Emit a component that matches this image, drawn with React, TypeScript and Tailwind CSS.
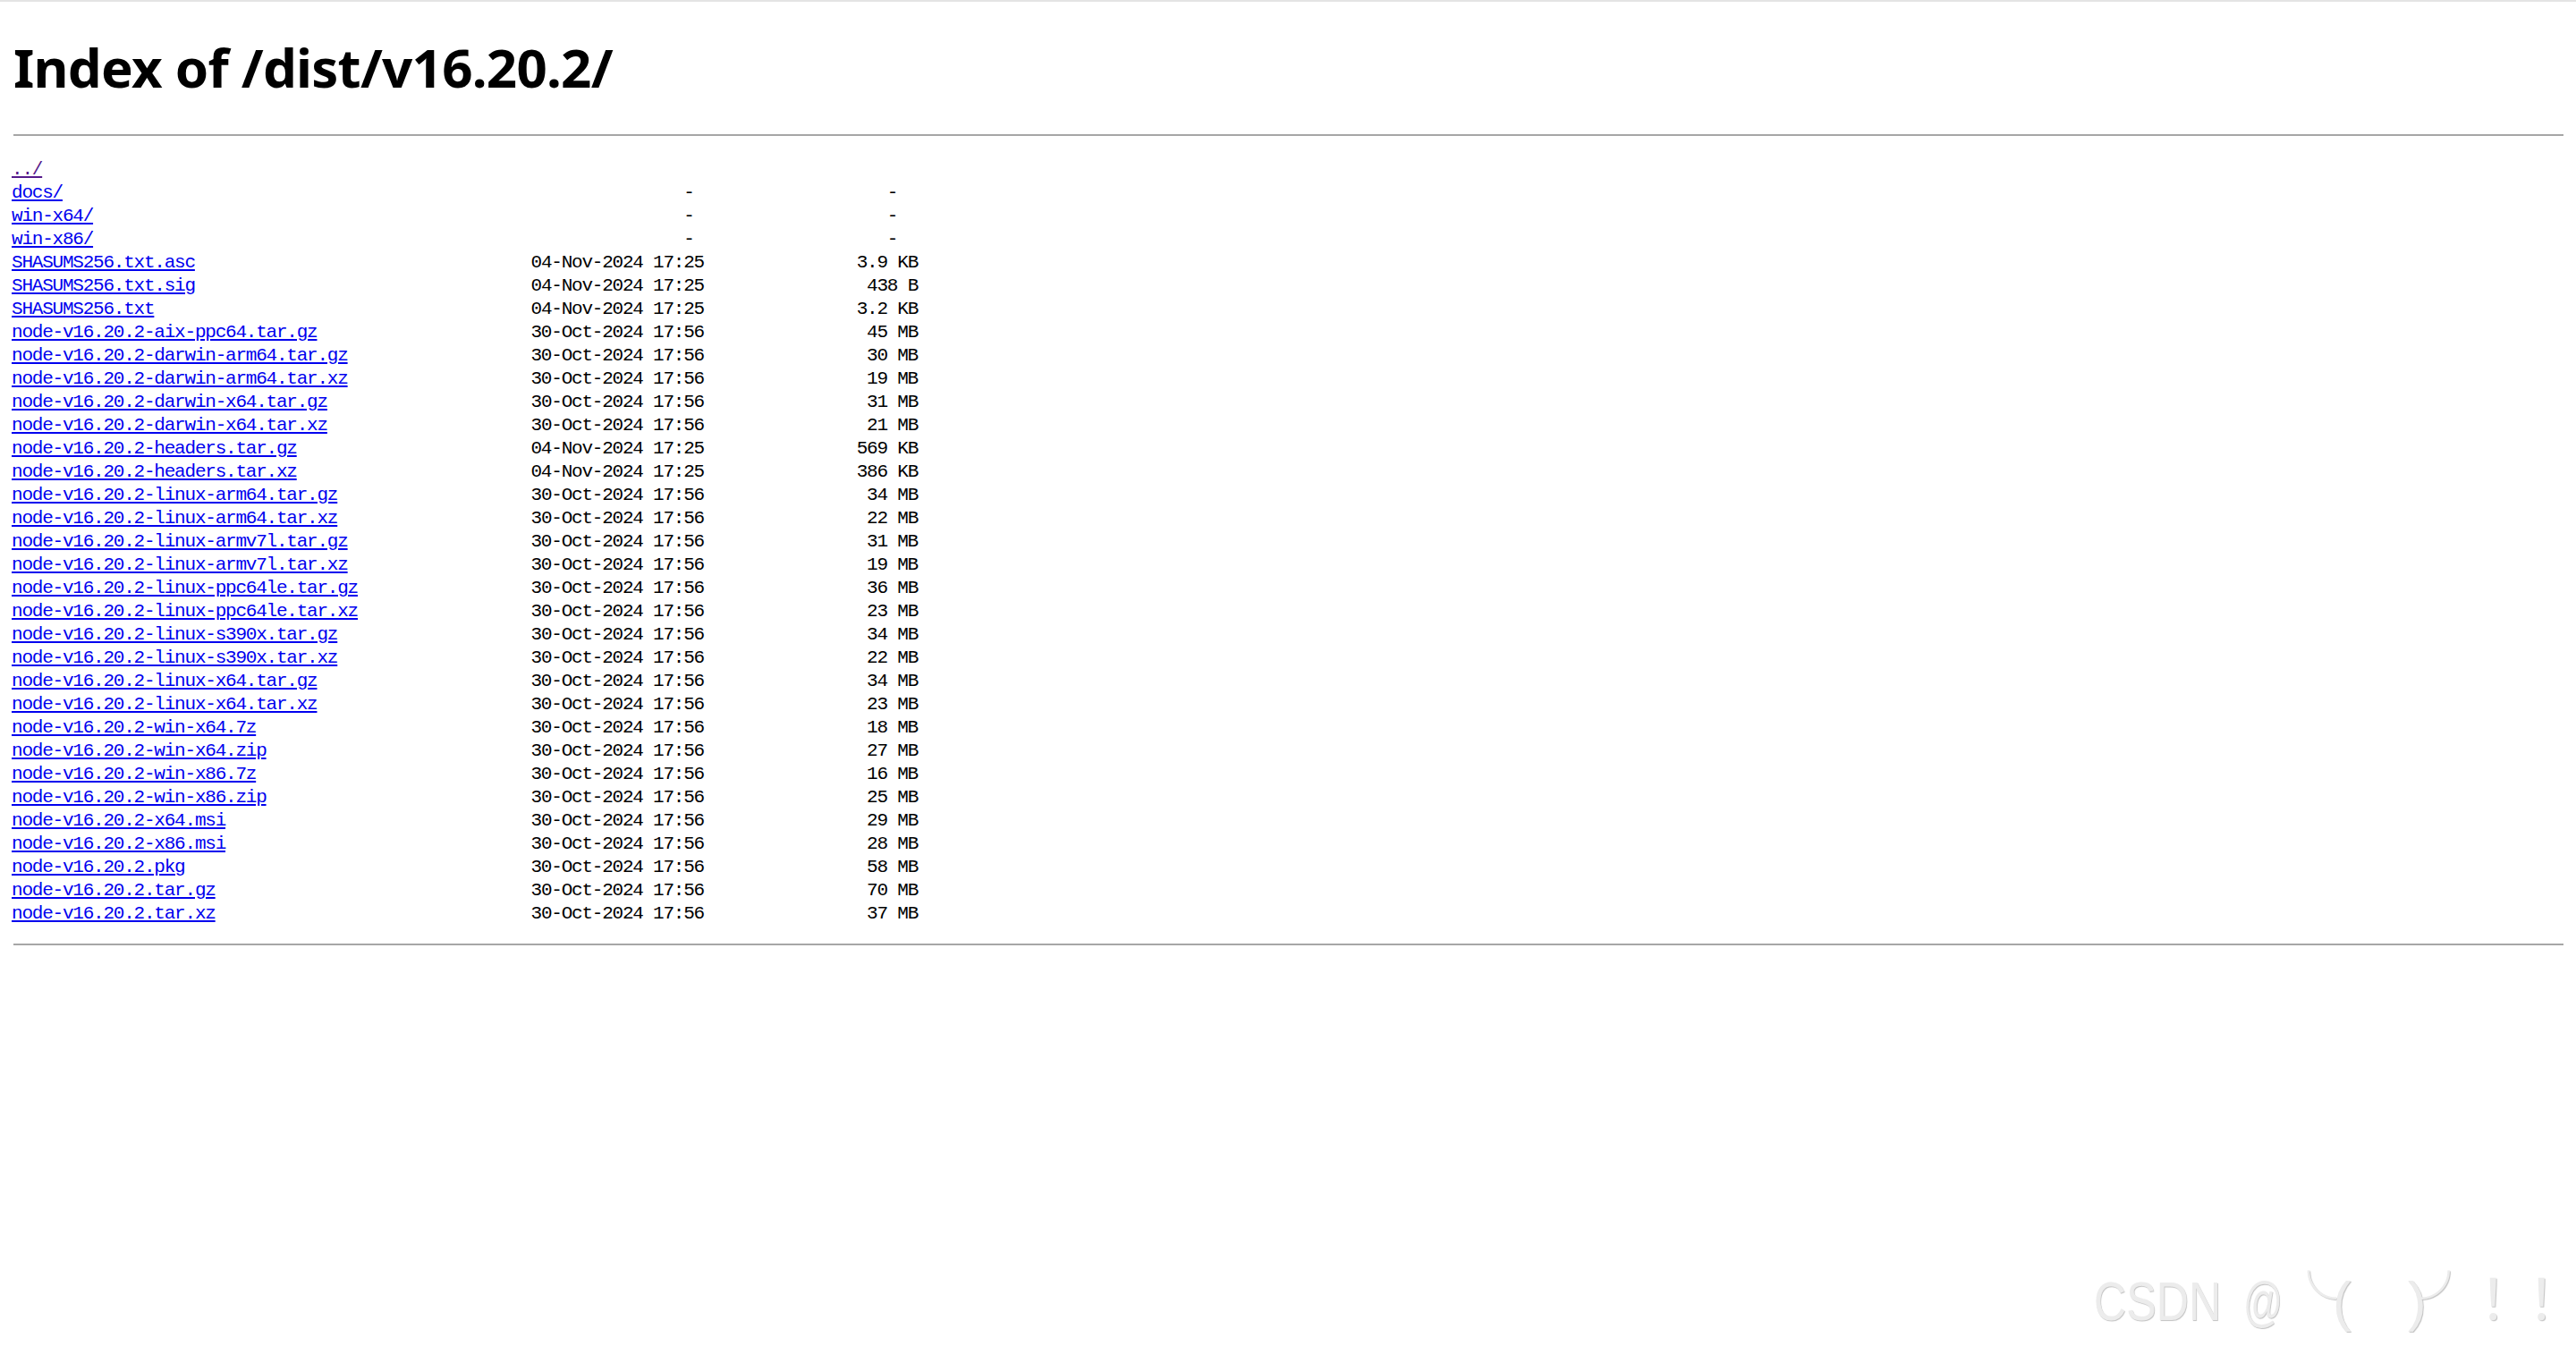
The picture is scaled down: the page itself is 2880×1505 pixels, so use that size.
import React from "react";

const dirs = ["docs/", "win-x64/", "win-x86/"];

const files: [string, string, string][] = [
  ["SHASUMS256.txt.asc", "04-Nov-2024 17:25", "3.9 KB"],
  ["SHASUMS256.txt.sig", "04-Nov-2024 17:25", "438 B"],
  ["SHASUMS256.txt", "04-Nov-2024 17:25", "3.2 KB"],
  ["node-v16.20.2-aix-ppc64.tar.gz", "30-Oct-2024 17:56", "45 MB"],
  ["node-v16.20.2-darwin-arm64.tar.gz", "30-Oct-2024 17:56", "30 MB"],
  ["node-v16.20.2-darwin-arm64.tar.xz", "30-Oct-2024 17:56", "19 MB"],
  ["node-v16.20.2-darwin-x64.tar.gz", "30-Oct-2024 17:56", "31 MB"],
  ["node-v16.20.2-darwin-x64.tar.xz", "30-Oct-2024 17:56", "21 MB"],
  ["node-v16.20.2-headers.tar.gz", "04-Nov-2024 17:25", "569 KB"],
  ["node-v16.20.2-headers.tar.xz", "04-Nov-2024 17:25", "386 KB"],
  ["node-v16.20.2-linux-arm64.tar.gz", "30-Oct-2024 17:56", "34 MB"],
  ["node-v16.20.2-linux-arm64.tar.xz", "30-Oct-2024 17:56", "22 MB"],
  ["node-v16.20.2-linux-armv7l.tar.gz", "30-Oct-2024 17:56", "31 MB"],
  ["node-v16.20.2-linux-armv7l.tar.xz", "30-Oct-2024 17:56", "19 MB"],
  ["node-v16.20.2-linux-ppc64le.tar.gz", "30-Oct-2024 17:56", "36 MB"],
  ["node-v16.20.2-linux-ppc64le.tar.xz", "30-Oct-2024 17:56", "23 MB"],
  ["node-v16.20.2-linux-s390x.tar.gz", "30-Oct-2024 17:56", "34 MB"],
  ["node-v16.20.2-linux-s390x.tar.xz", "30-Oct-2024 17:56", "22 MB"],
  ["node-v16.20.2-linux-x64.tar.gz", "30-Oct-2024 17:56", "34 MB"],
  ["node-v16.20.2-linux-x64.tar.xz", "30-Oct-2024 17:56", "23 MB"],
  ["node-v16.20.2-win-x64.7z", "30-Oct-2024 17:56", "18 MB"],
  ["node-v16.20.2-win-x64.zip", "30-Oct-2024 17:56", "27 MB"],
  ["node-v16.20.2-win-x86.7z", "30-Oct-2024 17:56", "16 MB"],
  ["node-v16.20.2-win-x86.zip", "30-Oct-2024 17:56", "25 MB"],
  ["node-v16.20.2-x64.msi", "30-Oct-2024 17:56", "29 MB"],
  ["node-v16.20.2-x86.msi", "30-Oct-2024 17:56", "28 MB"],
  ["node-v16.20.2.pkg", "30-Oct-2024 17:56", "58 MB"],
  ["node-v16.20.2.tar.gz", "30-Oct-2024 17:56", "70 MB"],
  ["node-v16.20.2.tar.xz", "30-Oct-2024 17:56", "37 MB"],
];

const pad = (n: number) => " ".repeat(Math.max(0, n));

function Listing() {
  return (
    <pre className="-ml-[2px] mt-[25px] whitespace-pre font-['Liberation_Mono','Courier_New',monospace] text-[21px] leading-[26px] tracking-[-1.22px] text-black">
      <a href="#" className="text-[#551a8b] underline">
        ../
      </a>
      {"\n"}
      {dirs.map((d) => (
        <React.Fragment key={d}>
          <a href="#" className="text-[#0000ee] underline">
            {d}
          </a>
          {pad(51 - d.length) + pad(15) + "-" + pad(19) + "-\n"}
        </React.Fragment>
      ))}
      {files.map(([name, date, size]) => (
        <React.Fragment key={name}>
          <a href="#" className="text-[#0000ee] underline">
            {name}
          </a>
          {pad(51 - name.length) + date + size.padStart(21, " ") + "\n"}
        </React.Fragment>
      ))}
    </pre>
  );
}

function Watermark() {
  const mark =
    "shrink-0 text-[62px] leading-[62px] text-[#ececec] [text-shadow:1px_1px_1px_#c2c2c2] whitespace-pre";
  const latin = "font-['Liberation_Sans',Arial,sans-serif]";
  const cjk = "font-['Noto_Sans_CJK_SC','Noto_Sans',sans-serif]";
  return (
    <div className="pointer-events-none absolute left-[2341px] top-[1418px] flex select-none items-baseline">
      <span className={`${mark} ${latin} w-[167px] origin-left scale-x-[0.81]`}>CSDN</span>
      <span className={`${mark} ${latin} w-[42px] origin-left scale-x-[0.7]`}>@</span>
      <span className={`${mark} ${cjk} tracking-[-4px]`}>╰</span>
      <span className={`${mark} ${latin} w-[84px]`}>(</span>
      <span className={`${mark} ${latin} tracking-[-6px]`}>)</span>
      <span className={`${mark} ${cjk} tracking-[3px]`}>╯</span>
      <span className={`${mark} ${cjk} tracking-[-8px]`}>！</span>
      <span className={`${mark} ${cjk} tracking-[-30px]`}>！</span>
    </div>
  );
}

export default function App() {
  return (
    <div className="relative min-h-[1505px] w-full overflow-hidden bg-white">
      <div className="h-[2px] w-full bg-[#e4e4e4]" />
      <div className="pl-[15px] pr-[14px]">
        <h1 className="mt-[37px] font-['Noto_Sans','Open_Sans',sans-serif] text-[60px] font-bold leading-[72px] tracking-[-0.75px] text-black">
          Index of /dist/v16.20.2/
        </h1>
        <div className="mt-[39px] h-[2px] w-full bg-[#a6a6a6]" />
        <Listing />
        <div className="mt-[20px] h-[2px] w-full bg-[#a6a6a6]" />
      </div>
      <Watermark />
    </div>
  );
}
